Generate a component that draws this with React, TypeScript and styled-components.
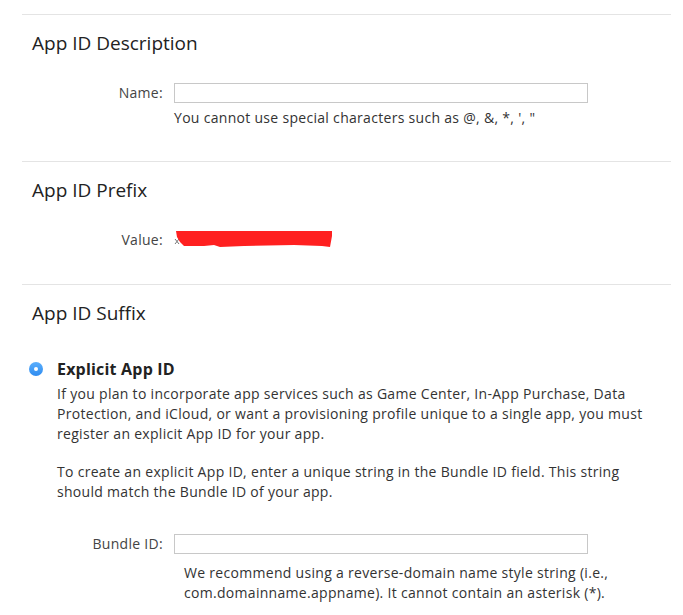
import styled, { createGlobalStyle } from 'styled-components'

const GlobalStyle = createGlobalStyle`
  body {
    margin: 0;
    background: #ffffff;
    font-family: "Open Sans", "Liberation Sans", sans-serif;
    color: #333333;
  }
`

const Page = styled.div`
  padding: 14px 12px 0 22px;
`

const Section = styled.section<{ $bottom: number }>`
  border-top: 1px solid #e4e4e4;
  padding: 16px 0 ${(p) => p.$bottom}px;
`

const Heading = styled.h2`
  margin: 0 0 0 10px;
  font-size: 19px;
  line-height: 24px;
  font-weight: 400;
  color: #222222;
`

const FieldRow = styled.div<{ $top: number }>`
  display: grid;
  grid-template-columns: 141px 414px;
  column-gap: 11px;
  align-items: center;
  margin-top: ${(p) => p.$top}px;
`

const Label = styled.label`
  text-align: right;
  font-size: 14px;
  line-height: 20px;
  letter-spacing: 0.3px;
  color: #444444;
`

const TextInput = styled.input`
  box-sizing: border-box;
  width: 414px;
  height: 20px;
  margin: 0;
  border: 1px solid #c8c8c8;
  border-radius: 0;
  padding: 0 4px;
  font: inherit;
  outline: none;
`

const Help = styled.p<{ $indent: number; $top: number }>`
  margin: ${(p) => p.$top}px 0 0 ${(p) => 152 + p.$indent}px;
  width: 445px;
  font-size: 14px;
  line-height: 20px;
  letter-spacing: 0.3px;
  color: #333333;
`

const Option = styled.div`
  display: grid;
  grid-template-columns: 14px 1fr;
  column-gap: 14px;
  align-items: center;
  margin: 34px 0 0 7px;
`

const Radio = styled.span`
  position: relative;
  width: 14px;
  height: 14px;
  border-radius: 50%;
  background: linear-gradient(#5aaefc, #2f8cf0);
  &::after {
    content: '';
    position: absolute;
    left: 5px;
    top: 5px;
    width: 4px;
    height: 4px;
    border-radius: 50%;
    background: #ffffff;
  }
`

const OptionTitle = styled.span`
  font-size: 16px;
  line-height: 20px;
  font-weight: 700;
  letter-spacing: 0.2px;
  color: #222222;
`

const Body = styled.div`
  margin-left: 35px;
  width: 592px;
`

const Para = styled.p<{ $top: number }>`
  margin: ${(p) => p.$top}px 0 0;
  font-size: 14px;
  line-height: 20px;
  letter-spacing: 0.3px;
  color: #333333;
`

const Redaction = styled.svg`
  display: block;
`

function RedMark() {
  return (
    <Redaction width="160" height="20" viewBox="0 0 160 20">
      <path d="M1 9 L5 14 M5 9 L1 14" stroke="#777" strokeWidth="1" />
      <path
        d="M2 1 L158 1 L158 6 L156 17 L148 16 L120 15 L70 16 L46 17 L40 15 L30 16 L10 16 L6 12 L3 7 Z"
        fill="#ff2020"
      />
    </Redaction>
  )
}

export default function App() {
  return (
    <Page>
      <GlobalStyle />
      <Section $bottom={33}>
        <Heading>App ID Description</Heading>
        <FieldRow $top={28}>
          <Label htmlFor="name">Name:</Label>
          <TextInput id="name" type="text" />
        </FieldRow>
        <Help $indent={0} $top={5}>
          You cannot use special characters such as @, &amp;, *, ', "
        </Help>
      </Section>
      <Section $bottom={34}>
        <Heading>App ID Prefix</Heading>
        <FieldRow $top={28}>
          <Label>Value:</Label>
          <RedMark />
        </FieldRow>
      </Section>
      <Section $bottom={20}>
        <Heading>App ID Suffix</Heading>
        <Option>
          <Radio />
          <OptionTitle>Explicit App ID</OptionTitle>
        </Option>
        <Body>
          <Para $top={5}>
            If you plan to incorporate app services such as Game Center, In-App Purchase, Data
            Protection, and iCloud, or want a provisioning profile unique to a single app, you must
            register an explicit App ID for your app.
          </Para>
          <Para $top={18}>
            To create an explicit App ID, enter a unique string in the Bundle ID field. This string
            should match the Bundle ID of your app.
          </Para>
        </Body>
        <FieldRow $top={32}>
          <Label htmlFor="bundle">Bundle ID:</Label>
          <TextInput id="bundle" type="text" />
        </FieldRow>
        <Help $indent={10} $top={9}>
          We recommend using a reverse-domain name style string (i.e.,
          com.domainname.appname). It cannot contain an asterisk (*).
        </Help>
      </Section>
    </Page>
  )
}
